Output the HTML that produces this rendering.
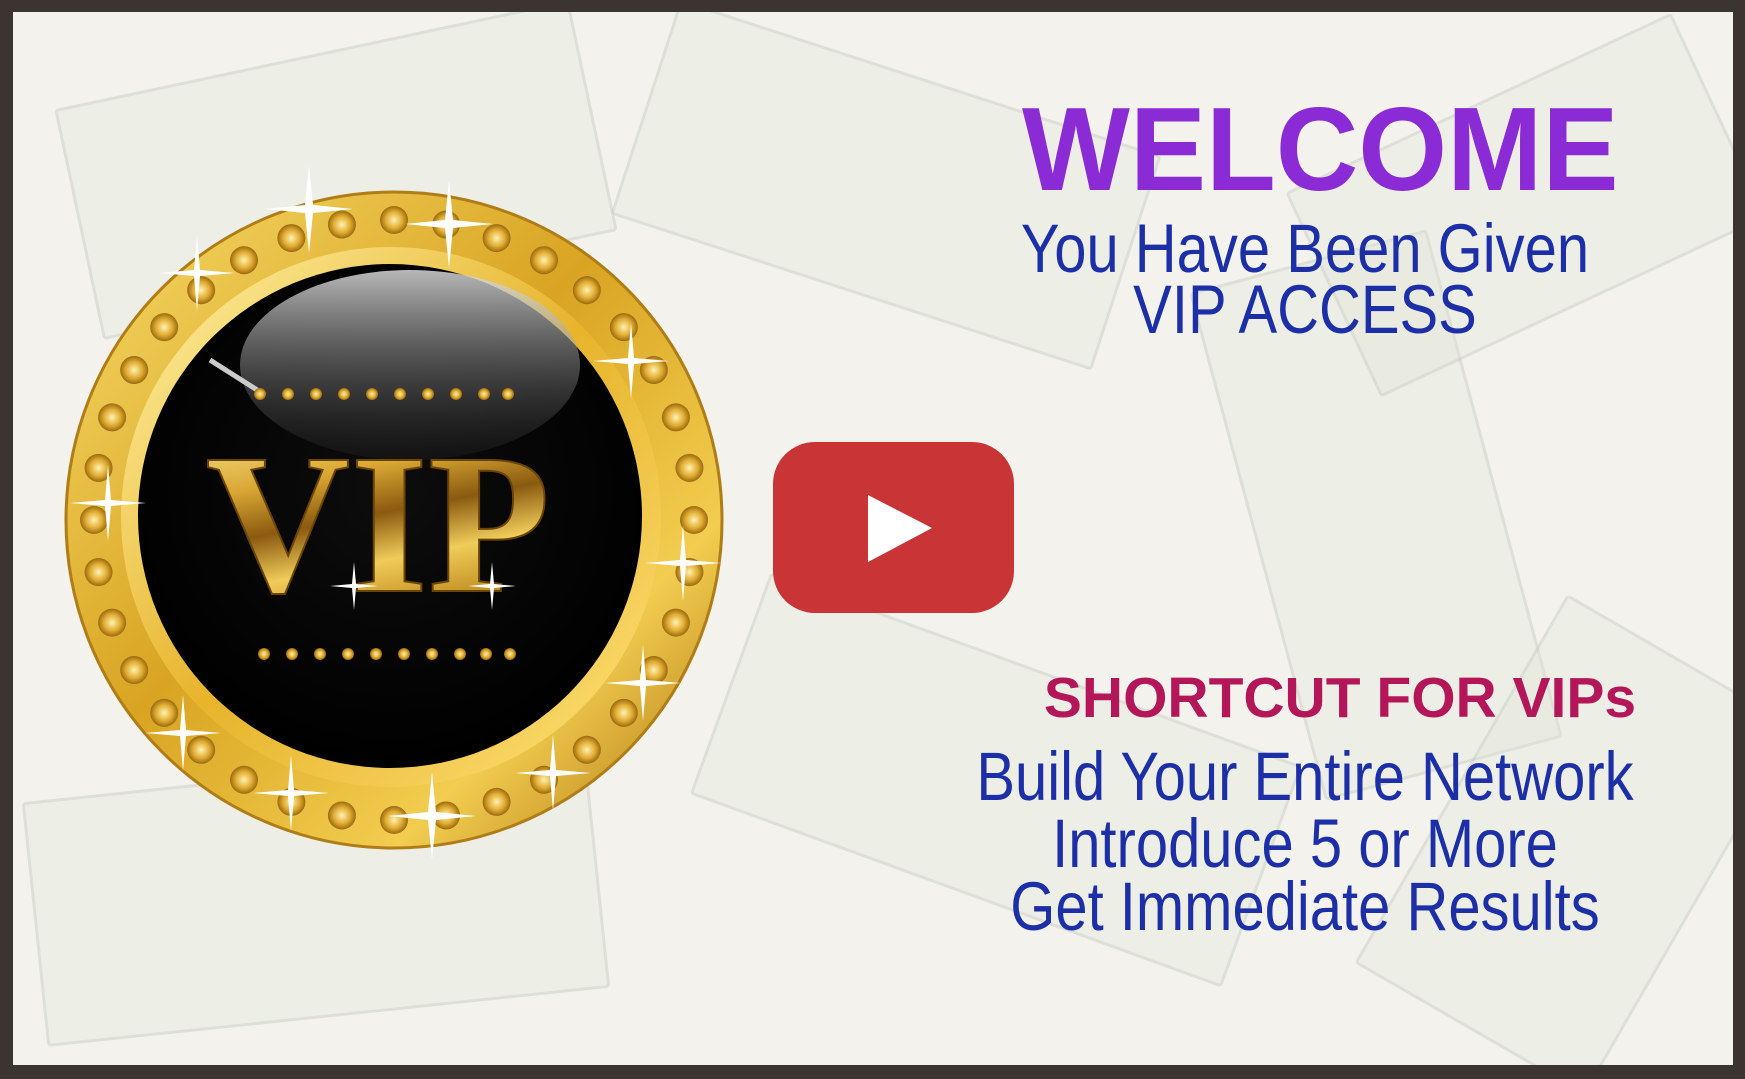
<!DOCTYPE html>
<html><head><meta charset="utf-8"><style>
html,body{margin:0;padding:0}
body{width:1745px;height:1079px;overflow:hidden;position:relative;background:#3b3431;font-family:"Liberation Sans",sans-serif}
#bg{position:absolute;left:13px;top:12px;width:1720px;height:1053px;background:#f3f2ec;overflow:hidden}
.bill{position:absolute;border:3px solid rgba(150,165,150,.18);background:rgba(225,228,215,.3);border-radius:4px}
.t{position:absolute;white-space:nowrap;text-align:center;line-height:1}
</style></head><body>
<div id="bg">
<div class="bill" style="left:60px;top:40px;width:520px;height:230px;transform:rotate(-12deg)"></div>
<div class="bill" style="left:620px;top:60px;width:500px;height:220px;transform:rotate(18deg)"></div>
<div class="bill" style="left:1100px;top:380px;width:520px;height:240px;transform:rotate(75deg)"></div>
<div class="bill" style="left:700px;top:650px;width:560px;height:230px;transform:rotate(20deg)"></div>
<div class="bill" style="left:20px;top:760px;width:560px;height:240px;transform:rotate(-6deg)"></div>
<div class="bill" style="left:1300px;top:80px;width:420px;height:220px;transform:rotate(-25deg)"></div>
<div class="bill" style="left:1350px;top:700px;width:420px;height:260px;transform:rotate(-60deg)"></div>
</div>
<svg width="1745" height="1079" viewBox="0 0 1745 1079" style="position:absolute;left:0;top:0">
<defs>
<linearGradient id="gr" x1="0" y1="0" x2="1" y2="1">
<stop offset="0" stop-color="#f7dc6a"/><stop offset=".45" stop-color="#d9a422"/><stop offset=".75" stop-color="#f2cd4f"/><stop offset="1" stop-color="#a86e0c"/></linearGradient>
<linearGradient id="gr2" x1="0" y1="0" x2="1" y2="1">
<stop offset="0" stop-color="#fff3a8"/><stop offset=".5" stop-color="#e7b42b"/><stop offset="1" stop-color="#ffe27a"/></linearGradient>
<linearGradient id="vt" x1="0" y1="0" x2="0.3" y2="1">
<stop offset="0" stop-color="#fff0a0"/><stop offset=".35" stop-color="#d9a633"/><stop offset=".55" stop-color="#8a5a10"/><stop offset=".75" stop-color="#f0cc5a"/><stop offset="1" stop-color="#b98418"/></linearGradient>
<radialGradient id="bk" cx=".5" cy=".45" r=".55"><stop offset="0" stop-color="#0d0d0d"/><stop offset="1" stop-color="#000"/></radialGradient>
<linearGradient id="gl" x1="0" y1="0" x2="0" y2="1"><stop offset="0" stop-color="#d8d8d8" stop-opacity=".85"/><stop offset="1" stop-color="#555" stop-opacity=".1"/></linearGradient>
<radialGradient id="dm"><stop offset="0" stop-color="#fff2b0"/><stop offset=".6" stop-color="#e0ab30"/><stop offset="1" stop-color="#9a6a10"/></radialGradient>
</defs>
<circle cx="394" cy="520" r="328" fill="url(#gr)"/>
<circle cx="394" cy="520" r="328" fill="none" stroke="#b07c15" stroke-width="3"/>
<circle cx="391" cy="517" r="270" fill="url(#gr2)"/>
<circle cx="390" cy="516" r="252" fill="url(#bk)"/>
<ellipse cx="410" cy="365" rx="170" ry="95" fill="url(#gl)"/>
<path d="M210 360 L265 395" stroke="#ccc" stroke-width="5"/>
<g fill="url(#dm)">
<g transform="translate(394 520)">
<circle cx="0" cy="-300" r="14"/><circle cx="0" cy="-300" r="14" transform="rotate(10)"/><circle cx="0" cy="-300" r="14" transform="rotate(20)"/><circle cx="0" cy="-300" r="14" transform="rotate(30)"/><circle cx="0" cy="-300" r="14" transform="rotate(40)"/><circle cx="0" cy="-300" r="14" transform="rotate(50)"/><circle cx="0" cy="-300" r="14" transform="rotate(60)"/><circle cx="0" cy="-300" r="14" transform="rotate(70)"/><circle cx="0" cy="-300" r="14" transform="rotate(80)"/><circle cx="0" cy="-300" r="14" transform="rotate(90)"/><circle cx="0" cy="-300" r="14" transform="rotate(100)"/><circle cx="0" cy="-300" r="14" transform="rotate(110)"/><circle cx="0" cy="-300" r="14" transform="rotate(120)"/><circle cx="0" cy="-300" r="14" transform="rotate(130)"/><circle cx="0" cy="-300" r="14" transform="rotate(140)"/><circle cx="0" cy="-300" r="14" transform="rotate(150)"/><circle cx="0" cy="-300" r="14" transform="rotate(160)"/><circle cx="0" cy="-300" r="14" transform="rotate(170)"/><circle cx="0" cy="-300" r="14" transform="rotate(180)"/><circle cx="0" cy="-300" r="14" transform="rotate(190)"/><circle cx="0" cy="-300" r="14" transform="rotate(200)"/><circle cx="0" cy="-300" r="14" transform="rotate(210)"/><circle cx="0" cy="-300" r="14" transform="rotate(220)"/><circle cx="0" cy="-300" r="14" transform="rotate(230)"/><circle cx="0" cy="-300" r="14" transform="rotate(240)"/><circle cx="0" cy="-300" r="14" transform="rotate(250)"/><circle cx="0" cy="-300" r="14" transform="rotate(260)"/><circle cx="0" cy="-300" r="14" transform="rotate(270)"/><circle cx="0" cy="-300" r="14" transform="rotate(280)"/><circle cx="0" cy="-300" r="14" transform="rotate(290)"/><circle cx="0" cy="-300" r="14" transform="rotate(300)"/><circle cx="0" cy="-300" r="14" transform="rotate(310)"/><circle cx="0" cy="-300" r="14" transform="rotate(320)"/><circle cx="0" cy="-300" r="14" transform="rotate(330)"/><circle cx="0" cy="-300" r="14" transform="rotate(340)"/><circle cx="0" cy="-300" r="14" transform="rotate(350)"/>
</g>
<circle cx="260" cy="394" r="6"/><circle cx="288" cy="394" r="6"/><circle cx="316" cy="394" r="6"/><circle cx="344" cy="394" r="6"/><circle cx="372" cy="394" r="6"/><circle cx="400" cy="394" r="6"/><circle cx="428" cy="394" r="6"/><circle cx="456" cy="394" r="6"/><circle cx="484" cy="394" r="6"/><circle cx="508" cy="394" r="6"/>
<circle cx="264" cy="654" r="6"/><circle cx="292" cy="654" r="6"/><circle cx="320" cy="654" r="6"/><circle cx="348" cy="654" r="6"/><circle cx="376" cy="654" r="6"/><circle cx="404" cy="654" r="6"/><circle cx="432" cy="654" r="6"/><circle cx="460" cy="654" r="6"/><circle cx="486" cy="654" r="6"/><circle cx="510" cy="654" r="6"/>
</g>
<text x="378" y="591" text-anchor="middle" font-family="Liberation Serif" font-weight="bold" font-size="200" fill="url(#vt)" stroke="#6b4508" stroke-width="2">VIP</text>
<g fill="#fff">
<path d="M305 205 l4 -40 l4 40 l40 4 l-40 4 l-4 40 l-4 -40 l-40 -4z"/>
<path d="M445 220 l4 -40 l4 40 l40 4 l-40 4 l-4 40 l-4 -40 l-40 -4z"/>
<path d="M194 270 l3 -35 l3 35 l35 3 l-35 3 l-3 35 l-3 -35 l-35 -3z"/>
<path d="M628 358 l3 -35 l3 35 l35 3 l-35 3 l-3 35 l-3 -35 l-35 -3z"/>
<path d="M680 560 l3 -35 l3 35 l35 3 l-35 3 l-3 35 l-3 -35 l-35 -3z"/>
<path d="M105 500 l3 -35 l3 35 l35 3 l-35 3 l-3 35 l-3 -35 l-35 -3z"/>
<path d="M180 730 l3 -35 l3 35 l35 3 l-35 3 l-3 35 l-3 -35 l-35 -3z"/>
<path d="M288 790 l3 -35 l3 35 l35 3 l-35 3 l-3 35 l-3 -35 l-35 -3z"/>
<path d="M428 812 l4 -40 l4 40 l40 4 l-40 4 l-4 40 l-4 -40 l-40 -4z"/>
<path d="M550 770 l3 -35 l3 35 l35 3 l-35 3 l-3 35 l-3 -35 l-35 -3z"/>
<path d="M640 680 l3 -35 l3 35 l35 3 l-35 3 l-3 35 l-3 -35 l-35 -3z"/>
<path d="M352 584 l2 -22 l2 22 l22 2 l-22 2 l-2 22 l-2 -22 l-22 -2z"/>
<path d="M490 584 l2 -22 l2 22 l22 2 l-22 2 l-2 22 l-2 -22 l-22 -2z"/>
</g>
<rect x="773" y="442" width="241" height="171" rx="42" fill="#c93437"/>
<path d="M868 495 L868 562 L932 528 Z" fill="#fff"/>
</svg>
<div class="t" style="left:1010px;width:600px;top:90px;font-size:119px;font-weight:bold;color:#8a2bd5;transform:scaleX(.96)">WELCOME</div>
<div class="t" style="left:955px;width:700px;top:214px;font-size:69px;color:#1c2fa6;transform:scaleX(.84)">You Have Been Given</div>
<div class="t" style="left:955px;width:700px;top:275px;font-size:69px;color:#1c2fa6;transform:scaleX(.84)">VIP ACCESS</div>
<div class="t" style="left:990px;width:700px;top:670px;font-size:57px;font-weight:bold;color:#b3175a">SHORTCUT FOR VIPs</div>
<div class="t" style="left:905px;width:800px;top:742px;font-size:69px;color:#1c2fa6;transform:scaleX(.84)">Build Your Entire Network</div>
<div class="t" style="left:905px;width:800px;top:809px;font-size:69px;color:#1c2fa6;transform:scaleX(.84)">Introduce 5 or More</div>
<div class="t" style="left:905px;width:800px;top:872px;font-size:69px;color:#1c2fa6;transform:scaleX(.84)">Get Immediate Results</div>
</body></html>
